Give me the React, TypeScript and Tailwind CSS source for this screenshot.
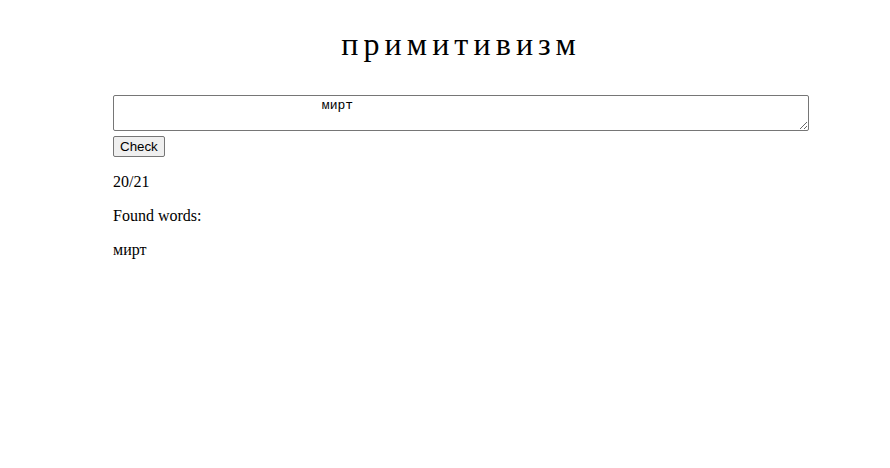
export default function App() {
  return (
    <div className="bg-white min-h-[468px] w-[890px]" style={{ fontFamily: '"Liberation Serif", serif' }}>
      <div className="ml-[113px] w-[696px] flex flex-col pt-[26px]">
        <h1 className="text-[32px] leading-[37px] text-center tracking-[5.1px] text-black m-0 mb-[32px]">примитивизм</h1>
        <textarea
          rows={2}
          className="block w-[696px] h-[36px] border border-[#767676] rounded-[2px] pl-[5px] pr-[2px] py-[2px] text-[13px] leading-[15px] text-black resize-y"
          style={{ fontFamily: '"Liberation Mono", monospace' }}
          defaultValue={"                          мирт"}
        />
        <div className="mt-[5px] flex">
          <button
            className="h-[21px] px-[6px] border border-[#767676] rounded-[2px] bg-[#efefef] text-[13.33px] text-black leading-[15px]"
            style={{ fontFamily: '"Liberation Sans", Arial, sans-serif' }}
          >
            Check
          </button>
        </div>
        <p className="text-[16px] leading-[18px] mt-[16px] text-black">20/21</p>
        <p className="text-[16px] leading-[18px] mt-[16px] text-black">Found words:</p>
        <p className="text-[16px] leading-[18px] mt-[16px] text-black">мирт</p>
      </div>
    </div>
  );
}
